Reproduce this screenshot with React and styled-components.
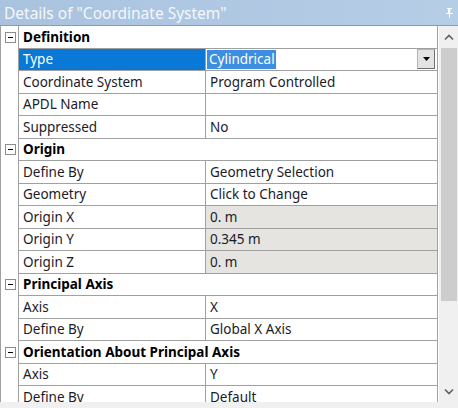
import React from "react";
import styled, { createGlobalStyle } from "styled-components";

const Global = createGlobalStyle`
  body {
    margin: 0;
    background: #f0f0f0;
    font-family: "Noto Sans", "Open Sans", sans-serif;
  }
`;

const Panel = styled.div`
  width: 458px;
  height: 408px;
  display: flex;
  flex-direction: column;
  background: #f0f0f0;
  overflow: hidden;
`;

const TitleBar = styled.div`
  height: 25px;
  flex: none;
  display: flex;
  align-items: center;
  justify-content: space-between;
  padding: 0 4px 0 4px;
  background: linear-gradient(to right, #a9c3df, #b6cde6);
  border-bottom: 1px solid #8f9aa6;
  color: #f4f7fb;
  font-size: 15.5px;
`;

const Body = styled.div`
  height: 376px;
  display: flex;
  background: #fff;
  border-left: 1px solid #a0a0a0;
`;

const Grid = styled.div`
  width: 436px;
  flex: none;
  overflow: hidden;
  border-right: 1px solid #a0a0a0;
`;

const Row = styled.div`
  display: flex;
  height: 22.5px;
`;

const Gutter = styled.div`
  width: 16px;
  flex: none;
  display: flex;
  align-items: center;
  justify-content: center;
  padding-left: 1px;
`;

const Toggle = styled.div`
  width: 9px;
  height: 9px;
  border: 1px solid #8c8c8c;
  background: #fff;
  display: flex;
  align-items: center;
  justify-content: center;
  &::after {
    content: "";
    width: 5px;
    height: 1px;
    background: #000;
  }
`;

const Header = styled.div`
  flex: 1;
  display: flex;
  align-items: center;
  padding-left: 4px;
  border-left: 1px solid #a0a0a0;
  border-bottom: 1px solid #a0a0a0;
  font-weight: 700;
  font-size: 13.5px;
  color: #000;
`;

const Name = styled.div`
  width: 182px;
  flex: none;
  display: flex;
  align-items: center;
  padding-left: 4px;
  border-left: 1px solid #a0a0a0;
  border-bottom: 1px solid #a0a0a0;
  font-size: 13.5px;
  color: ${(p) => (p.selected ? "#fff" : "#1b1b2a")};
  background: ${(p) => (p.selected ? "#0a78d7" : "#fff")};
`;

const Value = styled.div`
  flex: 1;
  display: flex;
  align-items: center;
  padding-left: 4px;
  border-left: 1px solid #a0a0a0;
  border-bottom: 1px solid #a0a0a0;
  font-size: 13.5px;
  color: #1b1b2a;
  background: ${(p) => (p.grey ? "#e6e4e1" : "#fff")};
`;

const Combo = styled.div`
  flex: 1;
  display: flex;
  align-items: center;
  justify-content: space-between;
  padding: 1px 2px 1px 1px;
  border-left: 1px solid #a0a0a0;
  border-bottom: 1px solid #a0a0a0;
  font-size: 13.5px;
`;

const Picked = styled.span`
  background: #3d8ee0;
  color: #fff;
  padding: 0 1px 0 2px;
  line-height: 19px;
`;

const DropButton = styled.div`
  width: 16px;
  height: 18px;
  display: flex;
  align-items: center;
  justify-content: center;
  background: #e3e3e3;
  border: 1px solid #b5b5b5;
  border-right-color: #6e6e6e;
  border-bottom-color: #6e6e6e;
`;

const Scrollbar = styled.div`
  width: 20px;
  flex: none;
  margin-left: 1px;
  background: #f0f0f0;
  display: flex;
  flex-direction: column;
`;

const Arrow = styled.div`
  height: 22px;
  flex: none;
  display: flex;
  align-items: center;
  justify-content: center;
`;

const Thumb = styled.div`
  height: 253px;
  margin: 0 2px;
  background: #cdcdcd;
`;

const Track = styled.div`
  flex: 1;
`;

const Pin = () => (
  <svg width="9" height="12" viewBox="0 0 9 12">
    <path d="M2 1h5v1H6v4h2v1H5v4H4V7H1V6h2V2H2z" fill="#fff" />
    <path d="M5 2h1v4H5z" fill="#c9d8ea" />
  </svg>
);

const Chevron = ({ down }) => (
  <svg width="10" height="7" viewBox="0 0 10 7">
    <path
      d={down ? "M1 1.5l4 4 4-4" : "M1 5.5l4-4 4 4"}
      fill="none"
      stroke="#606060"
      strokeWidth="1.6"
    />
  </svg>
);

const sections = [
  {
    title: "Definition",
    rows: [
      { name: "Type", value: "Cylindrical", combo: true },
      { name: "Coordinate System", value: "Program Controlled" },
      { name: "APDL Name", value: "" },
      { name: "Suppressed", value: "No" },
    ],
  },
  {
    title: "Origin",
    rows: [
      { name: "Define By", value: "Geometry Selection" },
      { name: "Geometry", value: "Click to Change" },
      { name: "Origin X", value: "0. m", grey: true },
      { name: "Origin Y", value: "0.345 m", grey: true },
      { name: "Origin Z", value: "0. m", grey: true },
    ],
  },
  {
    title: "Principal Axis",
    rows: [
      { name: "Axis", value: "X" },
      { name: "Define By", value: "Global X Axis" },
    ],
  },
  {
    title: "Orientation About Principal Axis",
    rows: [
      { name: "Axis", value: "Y" },
      { name: "Define By", value: "Default" },
    ],
  },
];

export default function App() {
  return (
    <Panel>
      <Global />
      <TitleBar>
        <span>Details of "Coordinate System"</span>
        <Pin />
      </TitleBar>
      <Body>
        <Grid>
          {sections.map((s) => (
            <React.Fragment key={s.title}>
              <Row>
                <Gutter>
                  <Toggle />
                </Gutter>
                <Header>{s.title}</Header>
              </Row>
              {s.rows.map((r, i) => (
                <Row key={s.title + i}>
                  <Gutter />
                  <Name selected={r.combo}>{r.name}</Name>
                  {r.combo ? (
                    <Combo>
                      <Picked>{r.value}</Picked>
                      <DropButton>
                        <svg width="7" height="4" viewBox="0 0 7 4">
                          <path d="M0 0h7L3.5 4z" fill="#000" />
                        </svg>
                      </DropButton>
                    </Combo>
                  ) : (
                    <Value grey={r.grey}>{r.value}</Value>
                  )}
                </Row>
              ))}
            </React.Fragment>
          ))}
        </Grid>
        <Scrollbar>
          <Arrow>
            <Chevron />
          </Arrow>
          <Thumb />
          <Track />
          <Arrow>
            <Chevron down />
          </Arrow>
        </Scrollbar>
      </Body>
    </Panel>
  );
}
